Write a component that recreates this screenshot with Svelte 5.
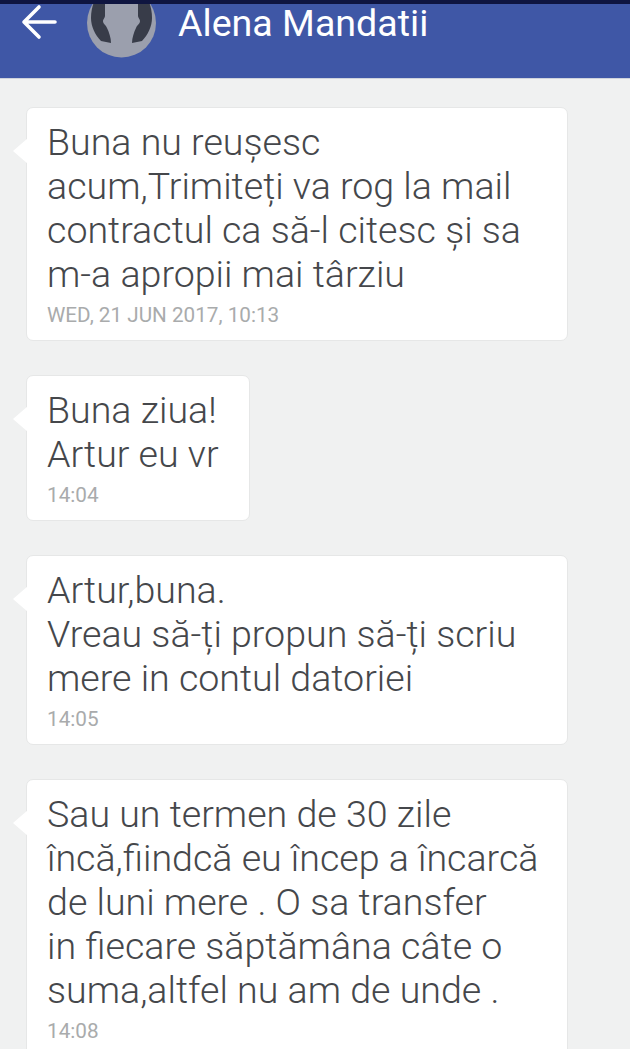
<script>
	const messages = [
		{ text: 'Buna nu reușesc acum,Trimiteți va rog la mail contractul ca să-l citesc și sa m-a apropii mai târziu', time: 'WED, 21 JUN 2017, 10:13' },
		{ text: 'Buna ziua!\nArtur eu vr', time: '14:04' },
		{ text: 'Artur,buna.\nVreau să-ți propun să-ți scriu mere in contul datoriei', time: '14:05' },
		{ text: 'Sau un termen de 30 zile încă,fiindcă eu încep a încarcă de luni mere . O sa transfer\nin fiecare săptămâna câte o suma,altfel nu am de unde .', time: '14:08' }
	];
</script>

<div class="page">
	<div class="statusbar"></div>
	<header>
		<svg class="back" viewBox="0 0 36 36" width="36" height="36" aria-label="back">
			<path d="M34 18H3M18 3 3 18 18 33" fill="none" stroke="#fff" stroke-width="3.6" stroke-linecap="round" stroke-linejoin="round"/>
		</svg>
		<svg class="avatar" viewBox="0 0 70 70" width="70" height="70" aria-label="avatar">
			<circle cx="34.5" cy="35" r="34.5" fill="#9b9fad"/>
			<path d="M7 14H18V28C18 30 16 31 16 33 16 36 19 37 20 40 22 44 24 50 24 55L14 53C8 47 4 38 4 30 4 24 5 19 7 14Z" fill="#383c49"/>
			<path d="M7 14H18V28C18 30 16 31 16 33 16 36 19 37 20 40 22 44 24 50 24 55L14 53C8 47 4 38 4 30 4 24 5 19 7 14Z" fill="#383c49" transform="matrix(-1 0 0 1 69 0)"/>
		</svg>
		<h1>Alena Mandatii</h1>
	</header>
	<main>
		{#each messages as m}
			<div class="bubble">
				<p>{m.text}</p>
				<span class="time">{m.time}</span>
			</div>
		{/each}
	</main>
</div>

<style>
	:global(body) {
		margin: 0;
		background: #f0f1f1;
	}

	.page {
		height: 1049px;
		overflow: hidden;
		background: #f0f1f1;
		font-family: Roboto, sans-serif;
	}

	.statusbar {
		height: 4px;
		background: #0f1540;
		position: relative;
		z-index: 1;
	}

	header {
		height: 75px;
		background: #3f57a6;
		border-bottom: 1px solid #cfd3dc;
		box-sizing: border-box;
		display: flex;
		align-items: flex-start;
	}

	.back {
		margin: 0 0 0 21px;
	}

	.avatar {
		margin: -16px 0 0 30px;
	}

	h1 {
		margin: 0 0 0 21px;
		font-size: 37.6px;
		line-height: 38px;
		font-weight: 400;
		color: #fff;
	}

	main {
		display: flex;
		flex-direction: column;
		align-items: flex-start;
		gap: 34px;
		padding: 28px 0 0 26px;
	}

	.bubble {
		position: relative;
		box-sizing: border-box;
		min-width: 224px;
		max-width: 542px;
		padding: 12px 26px 10px 20px;
		background: #fff;
		border: 1px solid #e6e7e7;
		border-radius: 7px;
	}

	.bubble::before {
		content: '';
		position: absolute;
		left: -14px;
		top: 30px;
		width: 15px;
		height: 26px;
		background: #fff;
		clip-path: polygon(100% 0, 0 50%, 100% 100%);
	}

	p {
		position: relative;
		margin: 0;
		font-size: 37.6px;
		line-height: 44px;
		font-weight: 300;
		color: #45474b;
		white-space: pre-line;
	}

	.time {
		display: block;
		margin-top: 4px;
		font-size: 20.7px;
		line-height: 30px;
		color: #a9abac;
	}
</style>
